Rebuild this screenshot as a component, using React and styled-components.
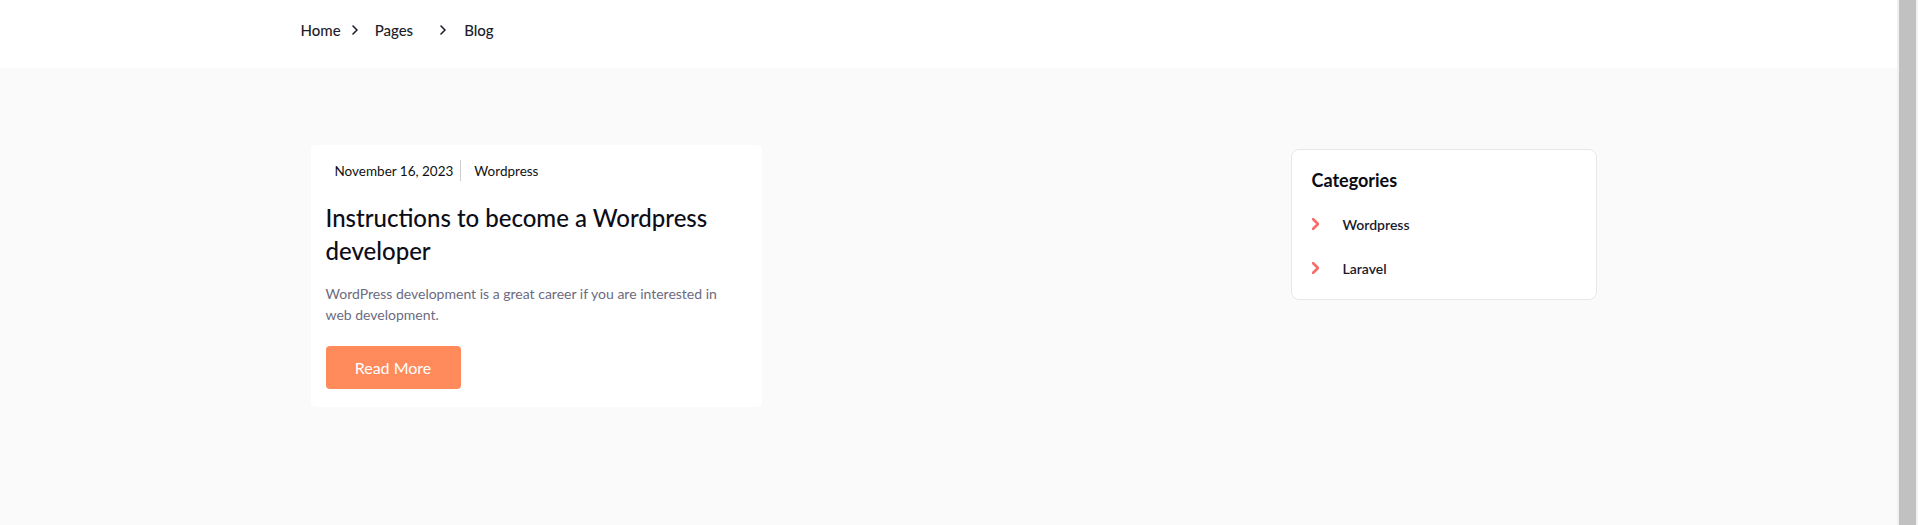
import styled, { createGlobalStyle } from "styled-components";

const GlobalStyle = createGlobalStyle`
    body {
        margin: 0 21px 0 0;
        background: #fafafa;
        font-family: "Segoe UI", Lato, "Noto Sans", sans-serif;
        color: #1b1b29;
    }
    * {
        box-sizing: border-box;
    }
`

const Page = styled.div`
    min-height: 525px;
`

// the browser scrollbar seen on the right of the screenshot
const ScrollTrack = styled.div`
    position: fixed;
    top: 0;
    right: 0;
    width: 21px;
    height: 100vh;
    background: #f1f1f1;
    padding: 0 2px 0 2px;
`

const ScrollThumb = styled.div`
    height: 100%;
    background: #c1c1c1;
`

const Header = styled.header`
    height: 68px;
    background: #ffffff;
`

const Container = styled.div`
    width: 1320px;
    margin: 0 auto;
    padding: 0 12px;
`

const Breadcrumb = styled.nav`
    display: flex;
    align-items: center;
    height: 60px;
    font-size: 15px;
    font-weight: 500;
    color: #1d1d2b;
`

const Crumb = styled.span`
    margin-right: ${(p) => p.gap || 0}px;
`

const Separator = styled.span`
    display: flex;
    align-items: center;
    margin-right: ${(p) => p.gap || 0}px;
    color: #1d1d2b;
`

const Main = styled.main`
    display: flex;
    justify-content: space-between;
    align-items: flex-start;
    padding-top: 77px;
`

const PostColumn = styled.section`
    margin-left: 10px;
`

const Card = styled.article`
    width: 451px;
    background: #ffffff;
    border-radius: 5px;
    padding: 15px 15px 18px;
`

const Meta = styled.div`
    display: flex;
    align-items: center;
    height: 21px;
    font-size: 13.5px;
    color: #111;
    padding-left: 9px;
`

const MetaItem = styled.span`
    padding-right: 7px;
`

const MetaDivider = styled.span`
    width: 1px;
    height: 21px;
    background: #cfcfcf;
    margin-right: 13px;
`

const Title = styled.h2`
    margin: 20px 0 0;
    font-size: 24px;
    font-weight: 500;
    line-height: 33px;
    color: #0d0d18;
`

const Excerpt = styled.p`
    margin: 16px 0 0;
    max-width: 405px;
    font-size: 14px;
    line-height: 21px;
    color: #6b6b7f;
`

const ReadMore = styled.button`
    margin-top: 21px;
    width: 135px;
    height: 43px;
    border: none;
    border-radius: 4px;
    background: #ff8a5b;
    color: #ffffff;
    font-family: inherit;
    font-size: 16px;
    cursor: pointer;
`

const Sidebar = styled.aside`
    width: 306px;
    margin-top: 4px;
    margin-right: 0;
    background: #ffffff;
    border: 1px solid #e7e8ec;
    border-radius: 8px;
    padding: 18px 20px 9px;
`

const WidgetTitle = styled.h3`
    margin: 0 0 10px;
    font-size: 18px;
    font-weight: 700;
    line-height: 24px;
    color: #0b0b14;
`

const CategoryList = styled.ul`
    list-style: none;
    margin: 0;
    padding: 0;
`

const CategoryItem = styled.li`
    display: flex;
    align-items: center;
    height: 44px;
    font-size: 14px;
    font-weight: 600;
    color: #1b1b2b;
`

const Arrow = styled.span`
    display: flex;
    width: 31px;
`

const Chevron = ({ size = 10, color = "currentColor", width = 1.6 }) => (
    <svg width={size * 0.6} height={size} viewBox="0 0 6 10" fill="none">
        <path d="M1 1l4 4-4 4" stroke={color} strokeWidth={width} strokeLinecap="round" strokeLinejoin="round" />
    </svg>
)

const categories = ["Wordpress", "Laravel"];

const App = () => {
    return (
        <Page>
            <GlobalStyle />
            <Header>
                <Container>
                    <Breadcrumb>
                        <Crumb gap={11}>Home</Crumb>
                        <Separator gap={17}><Chevron size={10} /></Separator>
                        <Crumb gap={27}>Pages</Crumb>
                        <Separator gap={18}><Chevron size={10} /></Separator>
                        <Crumb>Blog</Crumb>
                    </Breadcrumb>
                </Container>
            </Header>
            <Container>
                <Main>
                    <PostColumn>
                        <Card>
                            <Meta>
                                <MetaItem>November 16, 2023</MetaItem>
                                <MetaDivider />
                                <span>Wordpress</span>
                            </Meta>
                            <Title>Instructions to become a Wordpress developer</Title>
                            <Excerpt>
                                WordPress development is a great career if you are interested in web development.
                            </Excerpt>
                            <ReadMore>Read More</ReadMore>
                        </Card>
                    </PostColumn>
                    <Sidebar>
                        <WidgetTitle>Categories</WidgetTitle>
                        <CategoryList>
                            {categories.map((name) => (
                                <CategoryItem key={name}>
                                    <Arrow><Chevron size={12} color="#f76b6b" width={2.2} /></Arrow>
                                    {name}
                                </CategoryItem>
                            ))}
                        </CategoryList>
                    </Sidebar>
                </Main>
            </Container>
            <ScrollTrack><ScrollThumb /></ScrollTrack>
        </Page>
    )
}

export default App;
